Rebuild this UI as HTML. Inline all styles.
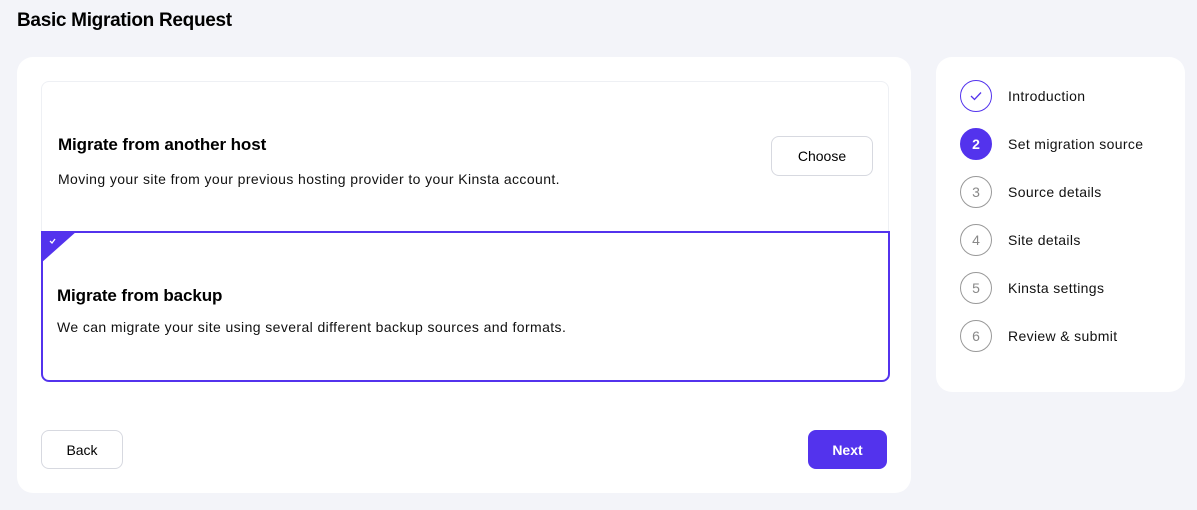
<!DOCTYPE html><html><head><style>
*{box-sizing:border-box;margin:0;padding:0}
body{width:1197px;height:510px;background:#f3f4f9;font-family:"Liberation Sans",sans-serif;color:#000;position:relative;overflow:hidden}
.a{position:absolute}
h1{position:absolute;left:17px;top:10px;font-size:19px;font-weight:bold;letter-spacing:-0.3px}
.card{background:#fff;border-radius:16px;position:absolute}
.btn{position:absolute;border:1px solid #d7d9e0;border-radius:8px;background:#fff;font-size:14px;display:flex;align-items:center;justify-content:center}
.t{font-size:17px;font-weight:bold;position:absolute;left:16px;letter-spacing:-0.1px}
.d{font-size:14px;position:absolute;left:16px;color:#111;letter-spacing:0.4px}
.s{position:absolute;left:24px;width:32px;height:32px;border-radius:50%;border:1px solid #999;color:#888;font-size:14px;display:flex;align-items:center;justify-content:center}
.sl{position:absolute;left:72px;font-size:14px;color:#111;letter-spacing:0.35px}
</style></head><body>
<h1>Basic Migration Request</h1>
<div class="card" style="left:17px;top:57px;width:894px;height:436px">
 <div class="a" style="left:24px;top:24px;width:848px;height:150px;border:1px solid #eef0f4;border-bottom:none;border-radius:8px 8px 0 0">
  <div class="t" style="top:53px">Migrate from another host</div>
  <div class="d" style="top:89px">Moving your site from your previous hosting provider to your Kinsta account.</div>
  <div class="btn" style="left:729px;top:54px;width:102px;height:40px">Choose</div>
 </div>
 <div class="a" style="left:24px;top:174px;width:849px;height:151px;border:2px solid #5333ed;border-radius:0 0 8px 8px;overflow:hidden">
  <svg class="a" style="left:-2px;top:-2px" width="38" height="34"><polygon points="0,0 36,0 0,32" fill="#5333ed"/><path d="M9 10 l2 2 l3-4" stroke="#fff" stroke-width="1.3" fill="none"/></svg>
  <div class="t" style="top:53px;left:14px">Migrate from backup</div>
  <div class="d" style="top:86px;left:14px">We can migrate your site using several different backup sources and formats.</div>
 </div>
 <div class="btn" style="left:24px;top:373px;width:82px;height:39px">Back</div>
 <div class="btn" style="left:791px;top:373px;width:79px;height:39px;background:#5333ed;border-color:#5333ed;color:#fff;font-weight:bold">Next</div>
</div>
<div class="card" style="left:936px;top:57px;width:249px;height:335px">
 <div class="s" style="top:23px;border-color:#5333ed"><svg width="14" height="12"><path d="M2 6 l3.5 3.5 l6.5-7" stroke="#5333ed" stroke-width="1.3" fill="none"/></svg></div><div class="sl" style="top:31px">Introduction</div>
 <div class="s" style="top:71px;background:#5333ed;border-color:#5333ed;color:#fff;font-weight:bold">2</div><div class="sl" style="top:79px">Set migration source</div>
 <div class="s" style="top:119px">3</div><div class="sl" style="top:127px">Source details</div>
 <div class="s" style="top:167px">4</div><div class="sl" style="top:175px">Site details</div>
 <div class="s" style="top:215px">5</div><div class="sl" style="top:223px">Kinsta settings</div>
 <div class="s" style="top:263px">6</div><div class="sl" style="top:271px">Review &amp; submit</div>
</div>
</body></html>
